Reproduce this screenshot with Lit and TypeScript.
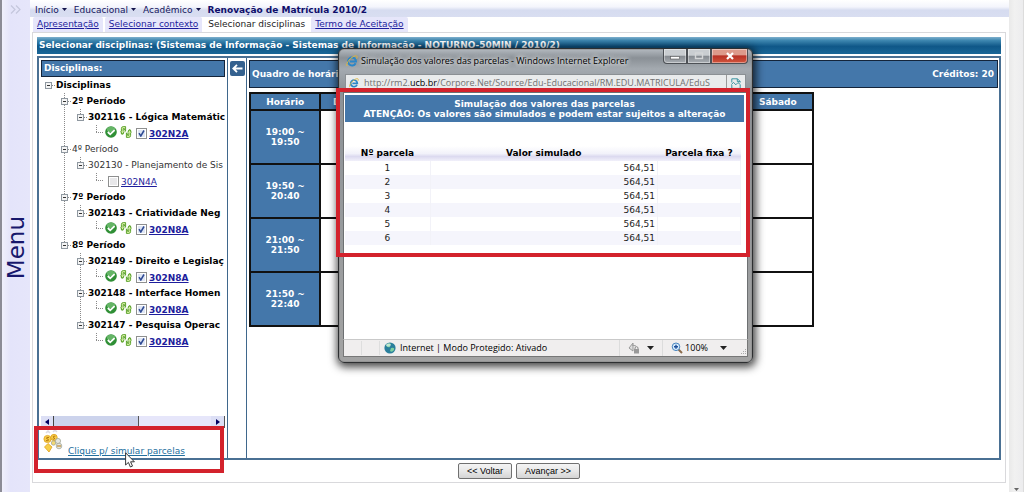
import { LitElement, html, css, svg, nothing } from "lit";
import { customElement } from "lit/decorators.js";
import { classMap } from "lit/directives/class-map.js";

type Guide = "blank" | "line" | "root" | "node" | "mid" | "last" | "corner";

interface TreeRow {
  guides: Guide[];
  text: string;
  bold?: boolean;
  leaf?: boolean;
  checked?: boolean;
}

const ROWS: TreeRow[] = [
  { guides: ["root"], text: "Disciplinas", bold: true },
  { guides: ["blank", "mid"], text: "2º Período", bold: true },
  { guides: ["blank", "line", "last"], text: "302116 - Lógica Matemátic", bold: true },
  { guides: ["blank", "line", "blank", "corner"], text: "302N2A", bold: true, leaf: true, checked: true },
  { guides: ["blank", "mid"], text: "4º Período" },
  { guides: ["blank", "line", "last"], text: "302130 - Planejamento de Sis" },
  { guides: ["blank", "line", "blank", "corner"], text: "302N4A", leaf: true },
  { guides: ["blank", "mid"], text: "7º Período", bold: true },
  { guides: ["blank", "line", "last"], text: "302143 - Criatividade Neg", bold: true },
  { guides: ["blank", "line", "blank", "corner"], text: "302N8A", bold: true, leaf: true, checked: true },
  { guides: ["blank", "last"], text: "8º Período", bold: true },
  { guides: ["blank", "blank", "mid"], text: "302149 - Direito e Legislaç", bold: true },
  { guides: ["blank", "blank", "line", "corner"], text: "302N8A", bold: true, leaf: true, checked: true },
  { guides: ["blank", "blank", "mid"], text: "302148 - Interface Homen", bold: true },
  { guides: ["blank", "blank", "line", "corner"], text: "302N8A", bold: true, leaf: true, checked: true },
  { guides: ["blank", "blank", "last"], text: "302147 - Pesquisa Operac", bold: true },
  { guides: ["blank", "blank", "blank", "corner"], text: "302N8A", bold: true, leaf: true, checked: true },
];

const guideIcon = (g: Guide) => {
  const up = g !== "root" && g !== "blank";
  const down = g === "line" || g === "mid";
  const box = g === "root" || g === "mid" || g === "last";
  return html`<svg class="guide" viewBox="0 0 16 16" aria-hidden="true">
    ${up ? svg`<path d="M8.5 0V8" stroke="#8a8a8a" stroke-dasharray="1 1"/>` : nothing}
    ${down ? svg`<path d="M8.5 8V16" stroke="#8a8a8a" stroke-dasharray="1 1"/>` : nothing}
    ${g === "corner" ? svg`<path d="M8 7.5H16" stroke="#8a8a8a" stroke-dasharray="1 1"/>` : nothing}
    ${box
      ? svg`<path d="M12 8.5H16" stroke="#8a8a8a" stroke-dasharray="1 1"/>
          <rect x="5.5" y="5.5" width="6" height="6" fill="#f4f4f4" stroke="#8f98a0"/>
          <path d="M7 8.5H10" stroke="#333"/>`
      : nothing}
  </svg>`;
};

const okIcon = html`<svg class="ico" viewBox="0 0 12 12" aria-hidden="true">
  <circle cx="6" cy="6" r="5.8" fill="#2f8f35" />
  <ellipse cx="6" cy="3.6" rx="4.2" ry="2.8" fill="#7cc57c" opacity=".7" />
  <path d="M2.8 6L5.2 8.3L9.6 4.2" fill="none" stroke="#fff" stroke-width="1.8" />
</svg>`;

const swapIcon = html`<svg class="ico" viewBox="0 0 12 12" aria-hidden="true">
  <g fill="#d9f2a8" stroke="#4f9a1e" stroke-width=".9" stroke-linejoin="round">
    <path d="M1.4 8V2.6Q1.4 .6 3.2 .6H5.6V5.2L4.4 4V2.6H3.2V8Z" />
    <path d="M.6 5.4L2.4 8.2L4.4 5.6" />
    <path d="M10.6 4V9.4Q10.6 11.4 8.8 11.4H6.4V6.8L7.6 8V9.4H8.8V4Z" />
    <path d="M7.6 6.4L9.6 3.6L11.4 6.4" />
  </g>
</svg>`;

const ieIcon = html`<svg class="ie" viewBox="0 0 12 12" aria-hidden="true">
  <path d="M9.6 8.2A4 4 0 1 1 10 6.4H4" fill="none" stroke="#2a86c8" stroke-width="2" />
  <path d="M1 11C-.6 8.5 5 1.5 9.5 .8C11.5 .5 11.4 2.2 10.6 3.6" fill="none" stroke="#e0b73c" stroke-width="1" />
</svg>`;

@customElement("simulation-window")
class SimulationWindow extends LitElement {
  static styles = css`
    :host { display: flex; flex-direction: column; box-sizing: border-box; border: 1px solid #2d2f31;
      border-radius: 6px; padding: 0 4px 5px; font: 9px/14px "DejaVu Sans", Verdana, sans-serif; color: #000;
      background: linear-gradient(180deg, #b4bac0 0, #8a9096 9px, #a4aab0 20px, #8c9297 42px, #a3a3a3 100%);
      box-shadow: 0 0 0 1px #8888 inset, 1px 2px 9px 2px #000b; }
    .title { display: flex; align-items: center; height: 23px; padding-left: 3px; gap: 3px; }
    .title h2 { flex: 1; margin: 0; font: 9px/12px "Open Sans", "Noto Sans", sans-serif; white-space: nowrap;
      text-shadow: 0 0 5px #fff, 0 0 5px #fff; }
    .ie { width: 12px; height: 12px; flex: none; }
    .controls { display: flex; align-self: flex-start; }
    .controls button { height: 15px; width: 24px; padding: 0; border: 1px solid #4c5055; border-top: 0; display: grid; place-items: center;
      background: linear-gradient(#c9cdd1 45%, #858a90 50%, #a9aeb3); box-shadow: 0 0 0 1px #fff6 inset; }
    .controls button:first-child { border-radius: 0 0 0 4px; }
    .controls .close { width: 37px; border-radius: 0 0 4px 0; background: linear-gradient(#dd9a8b 40%, #b83226 50%, #d2553c); }
    .controls svg { width: 12px; height: 10px; }
    .address { display: flex; align-items: center; height: 18px; margin: 2px 2px 0; background: #e9ebec; border: 1px solid #8b9094; box-sizing: border-box; }
    .address .ie { margin: 0 5px 0 3px; width: 10px; height: 10px; }
    .url { flex: 1; min-width: 0; overflow: hidden; white-space: nowrap; font: 9px/16px "Open Sans", "Noto Sans", sans-serif; color: #707070; }
    .url b { font-weight: 400; color: #000; }
    .compat { border: 0; border-left: 1px solid #999; background: none; padding: 0 4px; height: 16px; display: grid; place-items: center; }
    .compat svg { width: 10px; height: 11px; }
    .view { flex: 1; background: #fff; border: 1px solid #6d7072; border-bottom: 0; padding: 2px 3px 0 1px; }
    .marked { position: relative; height: 159px; }
    .marked::after { content: ""; position: absolute; inset: -7px -6px -3px -9px; border: 4px solid #d3222c; pointer-events: none; }
    .banner { background: #4477aa; color: #fff; font-weight: 700; text-align: center; line-height: 10px; padding: 4px 0 3px; margin: 0 0 24px; }
    table { border-collapse: collapse; width: calc(100% - 3px); table-layout: fixed; }
    th { height: 15px; padding: 0; line-height: 15px; background: linear-gradient(#fff, #f2f2fa 50%, #dcdaf0 70%, #f1f0fa); white-space: nowrap; }
    td { height: 14px; padding: 0; line-height: 14px; color: #222; border: 1px solid #f2f2f8; border-width: 0 1px 0 0; }
    .n { width: 85px; text-align: center; }
    .fix { width: 83px; }
    td.v { text-align: right; padding-right: 2px; }
    tbody tr:nth-child(even) { background: #f5f5fc; }
    .status { display: flex; align-items: center; height: 18px; background: #f0eeee; border: 1px solid #777; border-top-color: #c9c9c9; box-sizing: border-box;
      font: 9px/16px "Open Sans", "Noto Sans", sans-serif; }
    .cell { width: 17px; height: 14px; border-right: 1px solid #dedede; }
    .zone { flex: 1; display: flex; align-items: center; gap: 4px; padding-left: 4px; white-space: nowrap; }
    .zone svg { width: 12px; height: 12px; }
    .status button { display: flex; align-items: center; height: 16px; border: 0; border-left: 1px solid #dcdcdc; padding: 0 8px; gap: 7px; background: none; font: inherit; color: inherit; }
    .status button.zoom { gap: 2px; padding-right: 0; }
    .status .arrow { width: 7px; height: 4px; }
    .zoom .arrow { margin: 0 12px 0 10px; }
    .status .i { width: 12px; height: 12px; }
    .grip { width: 8px; height: 8px; align-self: flex-end; }
  `;

  render() {
    const arrow = html`<svg class="arrow" viewBox="0 0 7 4" aria-hidden="true"><path d="M0 0H7L3.5 4Z" fill="#222" /></svg>`;
    return html`
      <div class="title">
        ${ieIcon}
        <h2>Simulação dos valores das parcelas - Windows Internet Explorer</h2>
        <div class="controls">
          <button aria-label="Minimizar"><svg viewBox="0 0 12 10"><rect x="1.5" y="5.5" width="9" height="2.5" fill="#fff" stroke="#555" stroke-width=".6" /></svg></button>
          <button aria-label="Maximizar"><svg viewBox="0 0 12 10"><rect x="2.5" y="2" width="7" height="5.5" fill="none" stroke="#d4d6d8" stroke-width="1.4" /></svg></button>
          <button class="close" aria-label="Fechar"><svg viewBox="0 0 12 10"><path d="M3 2L9 8M9 2L3 8" stroke="#fff" stroke-width="2.2" /></svg></button>
        </div>
      </div>
      <div class="address">
        ${ieIcon}
        <span class="url">http://rm2.<b>ucb.br</b>/Corpore.Net/Source/Edu-Educacional/RM.EDU.MATRICULA/EduS</span>
        <button class="compat" aria-label="Modo de compatibilidade">
          <svg viewBox="0 0 10 11"><path d="M.8 4.5V.8H6.5L9.2 3.5V4.5M.8 7V10.4H9.2V7M6.3 .8V3.6H9M.3 6.6L2.6 4.4L4.8 6.8L7 4.6L9.6 6.8" fill="none" stroke="#2b8c9b" stroke-width=".9" /></svg>
        </button>
      </div>
      <div class="view">
        <div class="marked">
          <p class="banner">Simulação dos valores das parcelas<br />ATENÇÃO: Os valores são simulados e podem estar sujeitos a alteração</p>
          <table>
            <thead>
              <tr><th class="n">Nº parcela</th><th>Valor simulado</th><th class="fix">Parcela fixa ?</th></tr>
            </thead>
            <tbody>
              ${[1, 2, 3, 4, 5, 6].map((n) => html`<tr><td class="n">${n}</td><td class="v">564,51</td><td></td></tr>`)}
            </tbody>
          </table>
        </div>
      </div>
      <div class="status">
        <span class="cell"></span><span class="cell"></span>
        <span class="zone">
          <svg viewBox="0 0 12 12" aria-hidden="true"><circle cx="6" cy="6" r="5.6" fill="#2a7f9c" /><path d="M2 3Q5 0 7 2Q5 4 6 5Q3 6 2 3M7 6Q11 5 10 8Q8 11 6 9Z" fill="#7ed0a0" /><ellipse cx="4.5" cy="3" rx="2.5" ry="1.6" fill="#fff" opacity=".5" /></svg>
          Internet | Modo Protegido: Ativado
        </span>
        <button aria-label="Modo protegido">
          <svg class="i" viewBox="0 0 12 12"><path d="M1 6L5 1V9ZM4 3L8 4" fill="#ddd" stroke="#999" /><rect x="6" y="7" width="5" height="4.5" fill="#999" /><path d="M7 7V5.5Q8.5 3.8 10 5.5V7" fill="none" stroke="#888" /></svg>
          ${arrow}
        </button>
        <button class="zoom">
          <svg class="i" viewBox="0 0 12 12" aria-hidden="true"><path d="M7 7L11 11" stroke="#8a6a4a" stroke-width="2" /><circle cx="5" cy="4.8" r="3.8" fill="#d8ecfb" stroke="#4a86c0" /><path d="M3 4.8H7M5 2.8V6.8" stroke="#1d4f9c" stroke-width="1.4" /></svg>
          100%${arrow}
        </button>
        <svg class="grip" viewBox="0 0 8 8" aria-hidden="true"><path d="M6 1h1v1h-1zM4 3h1v1h-1zM6 3h1v1h-1zM2 5h1v1h-1zM4 5h1v1h-1zM6 5h1v1h-1z" fill="#aaa" /></svg>
      </div>
    `;
  }
}

@customElement("app-root")
class AppRoot extends LitElement {
  static styles = css`
    :host { display: flex; position: relative; min-height: 100vh; box-sizing: border-box; overflow: hidden; background: #fff;
      font: 9px/12px "DejaVu Sans", Verdana, sans-serif; color: #000; }
    a { color: #1d1d9c; }
    .menu { width: 30px; flex: none; box-sizing: border-box; border: 0 solid #8c8c96; border-left-width: 2px; display: flex; flex-direction: column; align-items: center;
      background: linear-gradient(90deg, #f0f0fc, #e4e4fa 30%, #e6e6fa); }
    .menu svg { width: 12px; height: 9px; margin-top: 5px; }
    .menu span { margin: auto; writing-mode: vertical-rl; transform: rotate(180deg); font-size: 23px; line-height: 27px; color: #17176c; padding-top: 10px; }
    .main { flex: 1; min-width: 0; display: flex; flex-direction: column; }
    .crumbs { display: flex; align-items: center; height: 17px; padding: 2px 0 0 5px; box-sizing: border-box; gap: 7px;
      background: linear-gradient(#fff, #f4f5fc 40%, #d6dcf0 60%, #d9def1); }
    .crumbs a { display: flex; align-items: center; gap: 3px; text-decoration: none; color: #14145c; }
    .crumbs svg { width: 5px; height: 3px; }
    .crumbs b { color: #0e0e6a; }
    .tabs { display: flex; height: 15px; margin-left: 3px; gap: 2px; }
    .tabs a { padding: 0 4px; line-height: 15px; background: #e6e6fa; border-radius: 2px 2px 0 0; }
    .tabs .on { background: #fff; color: #222; text-decoration: none; }
    .box { flex: 1; display: flex; flex-direction: column; margin: 0 3px 9px 2px; padding: 4px 4px 4px; border: 1px solid #d9d9dc; }
    .heading { margin: 0 0 2px; height: 17px; line-height: 17px; padding-left: 2px; color: #fff; font-size: 9px; white-space: nowrap; overflow: hidden;
      background: linear-gradient(#7fb0cd, #3e87b0 20%, #0f5788 55%, #1a6798); }
    .frame { flex: 1; display: flex; border: 2px solid #4a7093; min-width: 0; }
    .side { width: 184px; flex: none; padding: 2px; display: flex; flex-direction: column; border-right: 1px solid #3f678c; }
    .bar { margin: 0; background: #4477aa; color: #fff; border: 1px solid #14243a; font-size: 9px; font-weight: 700; }
    .side .bar { line-height: 15px; padding-left: 2px; }
    .tree { flex: 1; overflow: hidden; margin: 0; padding: 0; list-style: none; }
    .row { display: flex; height: 16px; margin-left: -1px; align-items: center; line-height: 16px; white-space: nowrap; color: #333; }
    .row.bold { font-weight: 700; color: #000; }
    .guide { width: 16px; height: 16px; flex: none; }
    .ico { width: 12px; height: 12px; flex: none; margin: 0 3px 2px 0; }
    .icons { display: flex; padding-left: 1px; }
    .row a { padding-top: 2px; }
    .row:not(.bold) input { margin-left: 4px; }
    input { appearance: none; flex: none; width: 11px; height: 11px; margin: 0 2px 0 1px; border: 1px solid #8e8f8f; background: #e8e8ea; box-shadow: 0 0 0 1px #fff inset; }
    input:checked { background: #dfe6f4 url('data:image/svg+xml,<svg xmlns="http://www.w3.org/2000/svg" viewBox="0 0 9 9"><path d="M2 4.2L3.8 7L7 1.5" fill="none" stroke="%232f4a94" stroke-width="1.5"/></svg>') center / 9px 9px no-repeat; }
    .scroll { display: flex; height: 12px; background: #e6e6fa; border-right: 1px solid #555; }
    .scroll button { width: 13px; padding: 0; border: 0; background: #dcdff5; display: grid; place-items: center; }
    .scroll button:first-child { border-right: 1px solid #444; }
    .scroll svg { width: 4px; height: 6px; }
    .thumb { width: 46%; background: #ccd3ec; border-right: 1px solid #555; margin-right: auto; }
    .simulate { position: relative; height: 28px; display: flex; align-items: flex-start; padding: 0 0 0 2px; gap: 4px; }
    .simulate a { color: #236f9e; margin-top: 17px; }
    .coins { width: 21px; height: 24px; margin-top: 2px; }
    .simulate::after { content: ""; position: absolute; inset: -2px 1px -17px -7px; border: 4px solid #d3222c; pointer-events: none; }
    .pointer { position: absolute; left: 84px; top: 24px; width: 10px; height: 16px; z-index: 1; }
    .gutter { width: 18px; flex: none; border-right: 1px solid #3f678c; }
    .gutter button { display: grid; place-items: center; width: 15px; height: 15px; margin: 3px 0 0 2px; padding: 0; border: 0; border-radius: 2px; background: #34618f; }
    .gutter svg { width: 11px; height: 9px; }
    .grid { flex: 1; min-width: 0; padding: 2px 1px 0 2px; }
    .grid .bar { display: flex; justify-content: space-between; line-height: 26px; padding: 0 3px 0 2px; margin-bottom: 4px; }
    table { border-collapse: collapse; table-layout: fixed; width: 565px; }
    th, td { border: 2px solid #111; padding: 0; }
    th { background: #4477aa; color: #fff; line-height: 10px; }
    thead th { height: 15px; }
    tbody th { height: 52px; padding: 0 14px; }
    .foot { display: flex; justify-content: center; gap: 4px; height: 16px; margin: 3px 0 -1px; }
    .foot button { padding: 0 8px; border: 1px solid #707070; border-radius: 2px; background: linear-gradient(#f4f4f4, #e8e8e8 50%, #d4d4d4); font: 9px/12px "Liberation Sans", Arial, sans-serif; color: #000; }
    .vscroll { width: 15px; flex: none; box-sizing: border-box; background: linear-gradient(90deg, #e9e9e9, #f1f1f1 40%, #ececee); border-right: 1px solid #dcdcdc; display: flex; flex-direction: column; justify-content: flex-end; align-items: center; }
    .vscroll svg { width: 5px; height: 3px; margin-bottom: 1px; }
    simulation-window { position: absolute; left: 338px; top: 48px; width: 415px; height: 315px; }
  `;

  private row(r: TreeRow, i: number) {
    return html`<li class=${classMap({ row: true, bold: !!r.bold })}>
      ${r.guides.map(guideIcon)}
      ${r.leaf
        ? html`${r.checked ? html`<span class="icons">${okIcon}${swapIcon}</span>` : nothing}
            <input type="checkbox" aria-labelledby="t${i}" .checked=${!!r.checked} /><a id="t${i}" href="#">${r.text}</a>`
        : html`<span>${r.text}</span>`}
    </li>`;
  }

  render() {
    const caret = html`<svg viewBox="0 0 5 3" aria-hidden="true"><path d="M0 0H5L2.5 3Z" fill="#14144a" /></svg>`;
    const days = ["Horário", "Domingo", "Segunda", "Terça", "Quarta", "Quinta", "Sexta", "Sábado"];
    const times = [["19:00", "19:50"], ["19:50", "20:40"], ["21:00", "21:50"], ["21:50", "22:40"]];
    return html`
      <aside class="menu">
        <svg viewBox="0 0 12 9" aria-hidden="true"><path d="M1 .5L5 4.5L1 8.5M6 .5L10 4.5L6 8.5" fill="none" stroke="#c4c6dc" stroke-width="1.2" /></svg>
        <span>Menu</span>
      </aside>
      <div class="main">
        <nav class="crumbs">
          <a href="#">Início ${caret}</a><a href="#">Educacional ${caret}</a><a href="#">Acadêmico ${caret}</a>
          <b>Renovação de Matrícula 2010/2</b>
        </nav>
        <nav class="tabs">
          <a href="#">Apresentação</a><a href="#">Selecionar contexto</a><a class="on" href="#">Selecionar disciplinas</a><a href="#">Termo de Aceitação</a>
        </nav>
        <div class="box">
          <h1 class="heading">Selecionar disciplinas: (Sistemas de Informação - Sistemas de Informação - NOTURNO-50MIN / 2010/2)</h1>
          <div class="frame">
            <section class="side">
              <h2 class="bar">Disciplinas:</h2>
              <ul class="tree">${ROWS.map((r, i) => this.row(r, i))}</ul>
              <div class="scroll">
                <button aria-label="Rolar à esquerda"><svg viewBox="0 0 4 6"><path d="M4 0V6L0 3Z" fill="#000060" /></svg></button>
                <div class="thumb"></div>
                <button aria-label="Rolar à direita"><svg viewBox="0 0 4 6"><path d="M0 0V6L4 3Z" fill="#000060" /></svg></button>
              </div>
              <div class="simulate">
                <svg class="coins" viewBox="0 0 21 24" aria-hidden="true">
                  <path d="M3 3L5 1L7 3M10 2L12 0L14 2" stroke="#dcdce4" stroke-width="1.5" fill="none" />
                  <g fill="#f6cf4a" stroke="#e0a01c" stroke-width=".8"><circle cx="4.5" cy="9" r="3.6" /><circle cx="11" cy="7.5" r="3.2" /><path d="M1.5 17L5 13.5L9 17L6 22Z" /></g>
                  <g fill="#e4e6df" stroke="#a5a898" stroke-width=".8"><circle cx="15" cy="11" r="2.6" /><circle cx="16" cy="16" r="2.8" /><circle cx="10.5" cy="13" r="2.2" fill="#f3d972" /></g>
                  <path d="M6 7.5Q3 6.8 3.5 8.5Q6 9 5.4 10.4Q4 11.4 2.9 10.4M12.3 6.2Q10 5.8 10 7Q12.2 8 11.4 9Q10.4 9.6 9.7 8.9M14 16H18" fill="none" stroke="#b9780c" />
                </svg>
                <a href="#">Clique p/ simular parcelas</a>
                <svg class="pointer" viewBox="0 0 10 16" aria-hidden="true"><path d="M.6 .8V13L3.4 10.4L5.4 15L7.5 14.1L5.6 9.8H9.4Z" fill="#fff" stroke="#222" stroke-width=".9" /></svg>
              </div>
            </section>
            <div class="gutter">
              <button aria-label="Recolher"><svg viewBox="0 0 11 9"><path d="M10.5 4.5H1.5M5 .8L1.3 4.5L5 8.2" fill="none" stroke="#fff" stroke-width="1.8" /></svg></button>
            </div>
            <section class="grid">
              <h2 class="bar"><span>Quadro de horários</span><span>Créditos: 20</span></h2>
              <table>
                <thead><tr>${days.map((d) => html`<th>${d}</th>`)}</tr></thead>
                <tbody>
                  ${times.map(([a, b]) => html`<tr><th>${a} ~ ${b}</th>${days.slice(1).map(() => html`<td></td>`)}</tr>`)}
                </tbody>
              </table>
            </section>
          </div>
          <div class="foot"><button>&lt;&lt; Voltar</button><button>Avançar &gt;&gt;</button></div>
        </div>
      </div>
      <div class="vscroll"><svg viewBox="0 0 5 3" aria-hidden="true"><path d="M0 0H5L2.5 3Z" fill="#666" /></svg></div>
      <simulation-window></simulation-window>
    `;
  }
}
